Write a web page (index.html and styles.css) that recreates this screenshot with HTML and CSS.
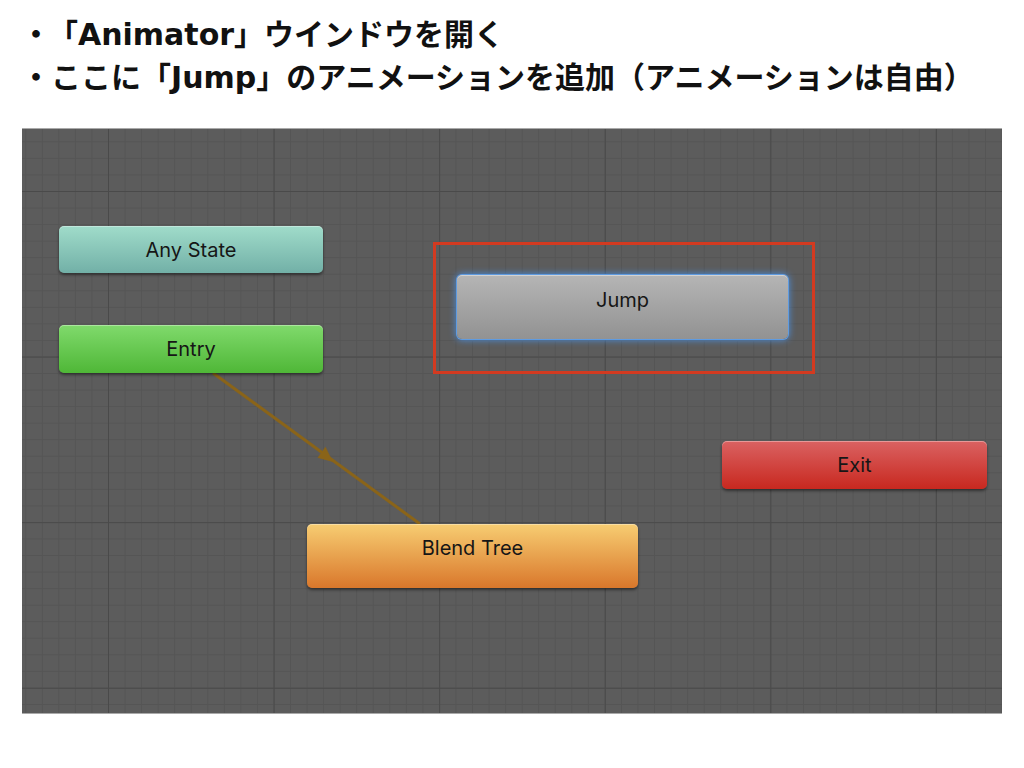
FILE: index.html
```
<!DOCTYPE html>
<html lang="ja">

<head>
    <meta charset="UTF-8">
    <meta name="viewport" content="width=device-width, initial-scale=1.0">
    <title>Animator</title>
    <link rel="stylesheet" href="styles.css">
</head>

<body>

    <div class="notes">
        <p><span class="dot">・</span>「Animator」ウインドウを開く</p>
        <p>・ここに「Jump」のアニメーションを追加（アニメーションは自由）</p>
    </div>

    <div class="graph">
        <svg class="links" width="980" height="586" viewBox="0 0 980 586">
            <line x1="191" y1="245" x2="398" y2="396" stroke="#8a6419" stroke-width="3" />
            <polygon points="311,334 295.5,329.8 303.5,318.8" fill="#8a6419" />
        </svg>

        <div class="node any">Any State</div>
        <div class="node entry">Entry</div>
        <div class="mark"></div>
        <div class="node jump">Jump</div>
        <div class="node exit">Exit</div>
        <div class="node blend">Blend Tree</div>
    </div>

</body>

</html>
```

FILE: styles.css
```
html,
body,
p {
    margin: 0;
    padding: 0;
}

body {
    background-color: #fff;
    font-family: "Inter", "Noto Sans", sans-serif;
}

.notes {
    height: 114px;
    padding: 13px 0 0 21px;
    box-sizing: border-box;
    margin-bottom: 14px;
}

.notes p {
    font-family: "DejaVu Sans", "Noto Sans CJK JP", sans-serif;
    font-weight: bold;
    font-size: 30px;
    line-height: 43px;
    color: #111;
}

.dot {
    margin-right: 12px;
}

.graph {
    position: relative;
    width: 980px;
    height: 586px;
    margin: 0 22px;
    overflow: hidden;
    background-color: #5c5c5c;
    background-image:
        linear-gradient(to right, #4a4a4a 1px, transparent 1px),
        linear-gradient(to bottom, #4a4a4a 1px, transparent 1px),
        linear-gradient(to right, #555 1px, transparent 1px),
        linear-gradient(to bottom, #555 1px, transparent 1px);
    background-size: 165.6px 165.6px, 165.6px 165.6px, 16.56px 16.56px, 16.56px 16.56px;
    background-position: 86px 63px;
    box-shadow: inset 0 1px 0 #a9a9a9, inset 0 -1px 0 #a9a9a9;
}

.links {
    position: absolute;
    left: 0;
    top: 0;
}

.node {
    position: absolute;
    display: flex;
    align-items: center;
    justify-content: center;
    box-sizing: border-box;
    border-radius: 5px;
    font-size: 20px;
    color: #161616;
    box-shadow: inset 0 1px 0 rgba(255, 255, 255, .35), 0 2px 3px rgba(0, 0, 0, .45);
}

.any {
    left: 37px;
    top: 98px;
    width: 264px;
    height: 47px;
    background: linear-gradient(#a0dcca, #72b0a7);
}

.entry {
    left: 37px;
    top: 197px;
    width: 264px;
    height: 48px;
    background: linear-gradient(#80da6c, #4fb737);
}

.jump {
    left: 435px;
    top: 147px;
    width: 331px;
    height: 64px;
    padding-bottom: 14px;
    background: linear-gradient(#b5b5b5, #929292);
    box-shadow: inset 0 1px 0 rgba(255, 255, 255, .4), 0 0 0 1px #5f9be0, 0 0 7px 1px #4b8fe0;
}

.exit {
    left: 700px;
    top: 313px;
    width: 265px;
    height: 48px;
    background: linear-gradient(#da6262, #c8281f);
}

.blend {
    left: 285px;
    top: 396px;
    width: 331px;
    height: 64px;
    padding-bottom: 16px;
    background: linear-gradient(#f7cd72, #d9772b);
}

.mark {
    position: absolute;
    left: 411px;
    top: 114px;
    width: 382px;
    height: 132px;
    box-sizing: border-box;
    border: 3px solid #d33a20;
}
```
